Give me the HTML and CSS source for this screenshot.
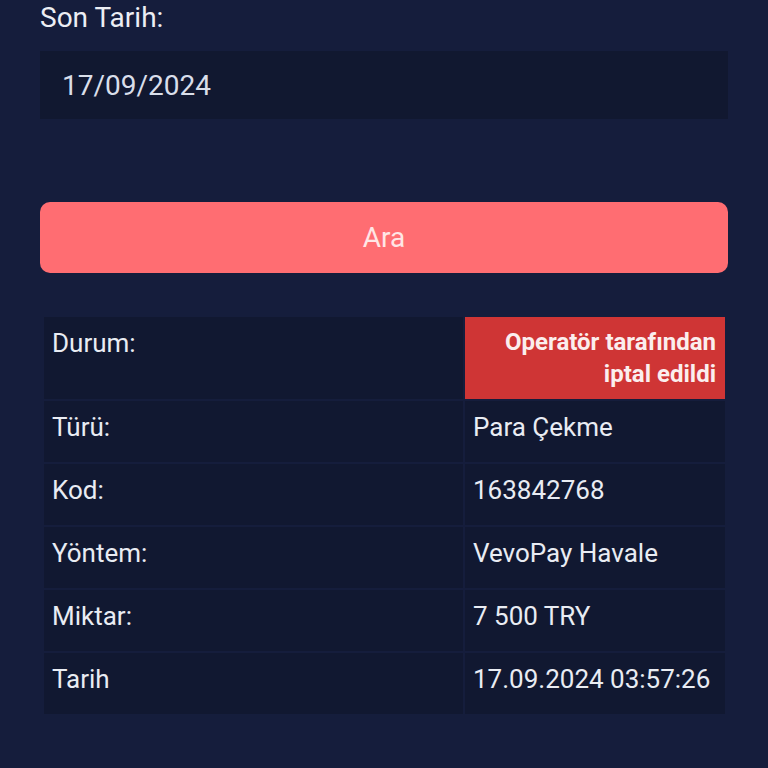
FILE: index.html
```html
<!DOCTYPE html>
<html lang="tr">
<head>
<meta charset="utf-8">
<title>İşlem Geçmişi</title>
<link rel="stylesheet" href="styles.css">
</head>
<body>
<main class="page">
  <form class="filter">
    <label class="field-label" for="end-date">Son Tarih:</label>
    <div class="date-input" id="end-date">17/09/2024</div>
    <button type="button" class="search-btn">Ara</button>
  </form>
  <table class="details">
    <tbody>
      <tr>
        <td class="key">Durum:</td>
        <td class="val status">Operatör tarafından iptal edildi</td>
      </tr>
      <tr>
        <td class="key">Türü:</td>
        <td class="val">Para Çekme</td>
      </tr>
      <tr>
        <td class="key">Kod:</td>
        <td class="val">163842768</td>
      </tr>
      <tr>
        <td class="key">Yöntem:</td>
        <td class="val">VevoPay Havale</td>
      </tr>
      <tr>
        <td class="key">Miktar:</td>
        <td class="val">7 500 TRY</td>
      </tr>
      <tr>
        <td class="key">Tarih</td>
        <td class="val">17.09.2024 03:57:26</td>
      </tr>
    </tbody>
  </table>
</main>
</body>
</html>
```
FILE: styles.css
```css
* { box-sizing: border-box; }

html, body {
  margin: 0;
  padding: 0;
  background: #151d3c;
  height: 100%;
}

body {
  font-family: Roboto, "Liberation Sans", Arial, sans-serif;
  color: #e9ecf3;
}

.page {
  padding: 2px 40px 0 40px;
}

.filter {
  display: flex;
  flex-direction: column;
}

.field-label {
  font-size: 28px;
  line-height: 32px;
  color: #eceef4;
}

.date-input {
  margin-top: 17px;
  height: 68px;
  background: #111830;
  padding: 0 22px;
  display: flex;
  align-items: center;
  font-size: 28px;
  color: #d9deea;
}

.search-btn {
  margin-top: 83px;
  height: 71px;
  border: none;
  border-radius: 10px;
  background: #ff6d72;
  color: #ffe6e6;
  font-family: Roboto, "Liberation Sans", Arial, sans-serif;
  font-size: 28px;
  padding: 0;
}

.details {
  margin: 42px 1px 0 2px;
  width: calc(100% - 3px);
  border-collapse: separate;
  border-spacing: 2px;
  table-layout: fixed;
}

.details td {
  background: #111831;
  vertical-align: top;
  font-size: 26px;
  line-height: 36px;
  padding: 8px 8px 17px 8px;
  color: #e9ecf3;
}

.details td.key {
  width: 419px;
}

.details td.status {
  background: #cf3535;
  color: #fbeeee;
  font-weight: 700;
  font-size: 24px;
  text-align: right;
  line-height: 32px;
  padding: 9px 9px 9px 30px;
}
```
